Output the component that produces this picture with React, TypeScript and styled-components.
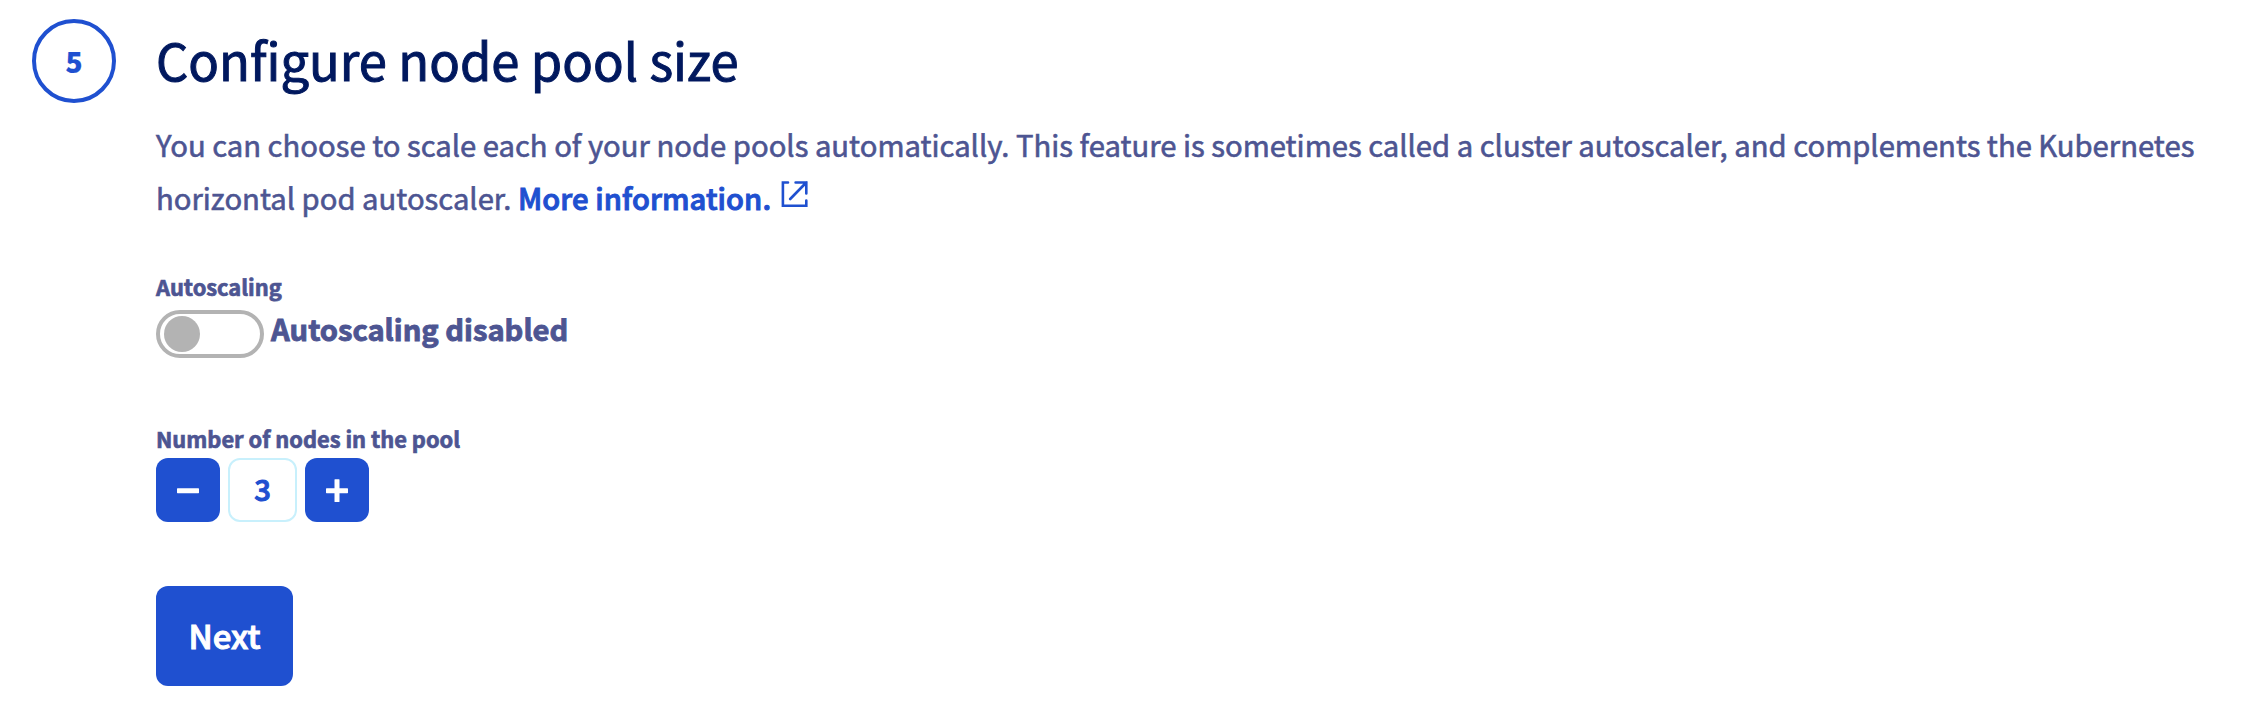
import React, { useState } from 'react';
import styled, { createGlobalStyle } from 'styled-components';

const blue = '#1f50d0';
const slate = '#4d5592';

const Global = createGlobalStyle`
  * { box-sizing: border-box; }
  body {
    margin: 0;
    background: #fff;
    color: ${slate};
    font-family: "Source Sans Pro", "Noto Sans CJK SC", sans-serif;
    -webkit-text-stroke: 0.6px currentColor;
  }
  button, input { font: inherit; -webkit-text-stroke: inherit; }
`;

const Step = styled.section`
  display: flex;
  align-items: flex-start;
  gap: 40px;
  padding: 19px 0 32px 32px;
`;

const StepNumber = styled.div`
  flex: none;
  display: flex;
  align-items: center;
  justify-content: center;
  width: 84px;
  height: 84px;
  border: 4px solid ${blue};
  border-radius: 50%;
  color: ${blue};
  font-size: 28px;
  font-weight: 900;
  line-height: 40px;
  -webkit-text-stroke-width: 0.2px;
`;

const Content = styled.div`
  flex: 1;
  min-width: 0;
`;

const Title = styled.h2`
  margin: 0;
  color: #00185e;
  font-size: 50.7px;
  font-weight: 400;
  line-height: 80px;
  -webkit-text-stroke-width: 1px;
`;

const Description = styled.p`
  height: 106px;
  margin: 19px 0 0;
  font-size: 29.24px;
  line-height: 52.8px;
  white-space: nowrap;
`;

const Link = styled.a`
  color: ${blue};
  font-size: 29.2px;
  font-weight: 500;
  letter-spacing: 0.08px;
  text-decoration: none;
  -webkit-text-stroke-width: 1px;
`;

const LinkIcon = styled.svg`
  width: 28px;
  height: 28px;
  margin-left: 9px;
  vertical-align: 1px;
`;

const Field = styled.div<{ $gap: number }>`
  margin-top: ${(p) => p.$gap}px;
`;

const Label = styled.div<{ $space: number }>`
  padding-bottom: ${(p) => p.$space}px;
  font-size: 21.85px;
  font-weight: 700;
  line-height: 32px;
  -webkit-text-stroke-width: 0.7px;
`;

const Row = styled.div<{ $gap: number }>`
  display: flex;
  gap: ${(p) => p.$gap}px;
`;

const Toggle = styled.button`
  flex: none;
  display: flex;
  align-items: center;
  width: 108px;
  height: 48px;
  padding: 0 4px;
  border: 4px solid #b3b3b3;
  border-radius: 24px;
  background: #fff;
`;

const Knob = styled.span`
  width: 36px;
  height: 36px;
  border-radius: 50%;
  background: #b3b3b3;
`;

const ToggleText = styled.span`
  font-size: 29.15px;
  font-weight: 700;
  line-height: 36px;
  -webkit-text-stroke-width: 0.9px;
`;

const StepButton = styled.button`
  display: flex;
  align-items: center;
  justify-content: center;
  width: 64px;
  height: 64px;
  padding: 0;
  border: 0;
  border-radius: 12px;
  background: ${blue};
`;

const Count = styled.input`
  width: 69px;
  height: 64px;
  padding: 0 0 4px;
  border: 2px solid #c8f0fc;
  border-radius: 12px;
  background: #fff;
  color: ${blue};
  font-size: 29.2px;
  font-weight: 500;
  text-align: center;
  -webkit-text-stroke-width: 1px;
`;

const NextButton = styled.button`
  display: block;
  width: 137px;
  height: 100px;
  margin-top: 64px;
  padding: 0 0 3px;
  border: 0;
  border-radius: 12px;
  background: ${blue};
  color: #fff;
  font-size: 33px;
  font-weight: 500;
  -webkit-text-stroke-width: 1px;
`;

const ExternalIcon = () => (
  <LinkIcon viewBox="0 0 28 28" fill="none" stroke={blue} strokeWidth="2.6" aria-hidden="true">
    <path d="M8 1.5H2.9V24.7H26.3V19.6M15.6 1.5H26.3V12.4M26.3 1.5L10.2 18" strokeLinecap="round" />
  </LinkIcon>
);

const SignIcon = ({ plus }: { plus?: boolean }) => (
  <svg width="24" height="24" viewBox="0 0 24 24" fill="#fff" aria-hidden="true">
    <rect x="1" y="10.2" width="22" height="5" rx="0.6" />
    {plus && <rect x="9.5" y="1.2" width="5" height="22.8" rx="0.6" />}
  </svg>
);

export default function App() {
  const [count, setCount] = useState(3);
  return (
    <>
      <Global />
      <Step>
        <StepNumber>5</StepNumber>
        <Content>
          <Title>Configure node pool size</Title>
          <Description>
            You can choose to scale each of your node pools automatically. This feature is sometimes called a cluster autoscaler, and complements the Kubernetes
            <br />
            horizontal pod autoscaler. <Link>More information.<ExternalIcon /></Link>
          </Description>
          <Field $gap={47}>
            <Label $space={7}>Autoscaling</Label>
            <Row $gap={7}>
              <Toggle type="button" aria-label="Autoscaling"><Knob /></Toggle>
              <ToggleText>Autoscaling disabled</ToggleText>
            </Row>
          </Field>
          <Field $gap={65}>
            <Label $space={3}>Number of nodes in the pool</Label>
            <Row $gap={8}>
              <StepButton type="button" aria-label="Remove node" onClick={() => setCount(count - 1)}><SignIcon /></StepButton>
              <Count value={count} readOnly />
              <StepButton type="button" aria-label="Add node" onClick={() => setCount(count + 1)}><SignIcon plus /></StepButton>
            </Row>
          </Field>
          <NextButton type="button">Next</NextButton>
        </Content>
      </Step>
    </>
  );
}
